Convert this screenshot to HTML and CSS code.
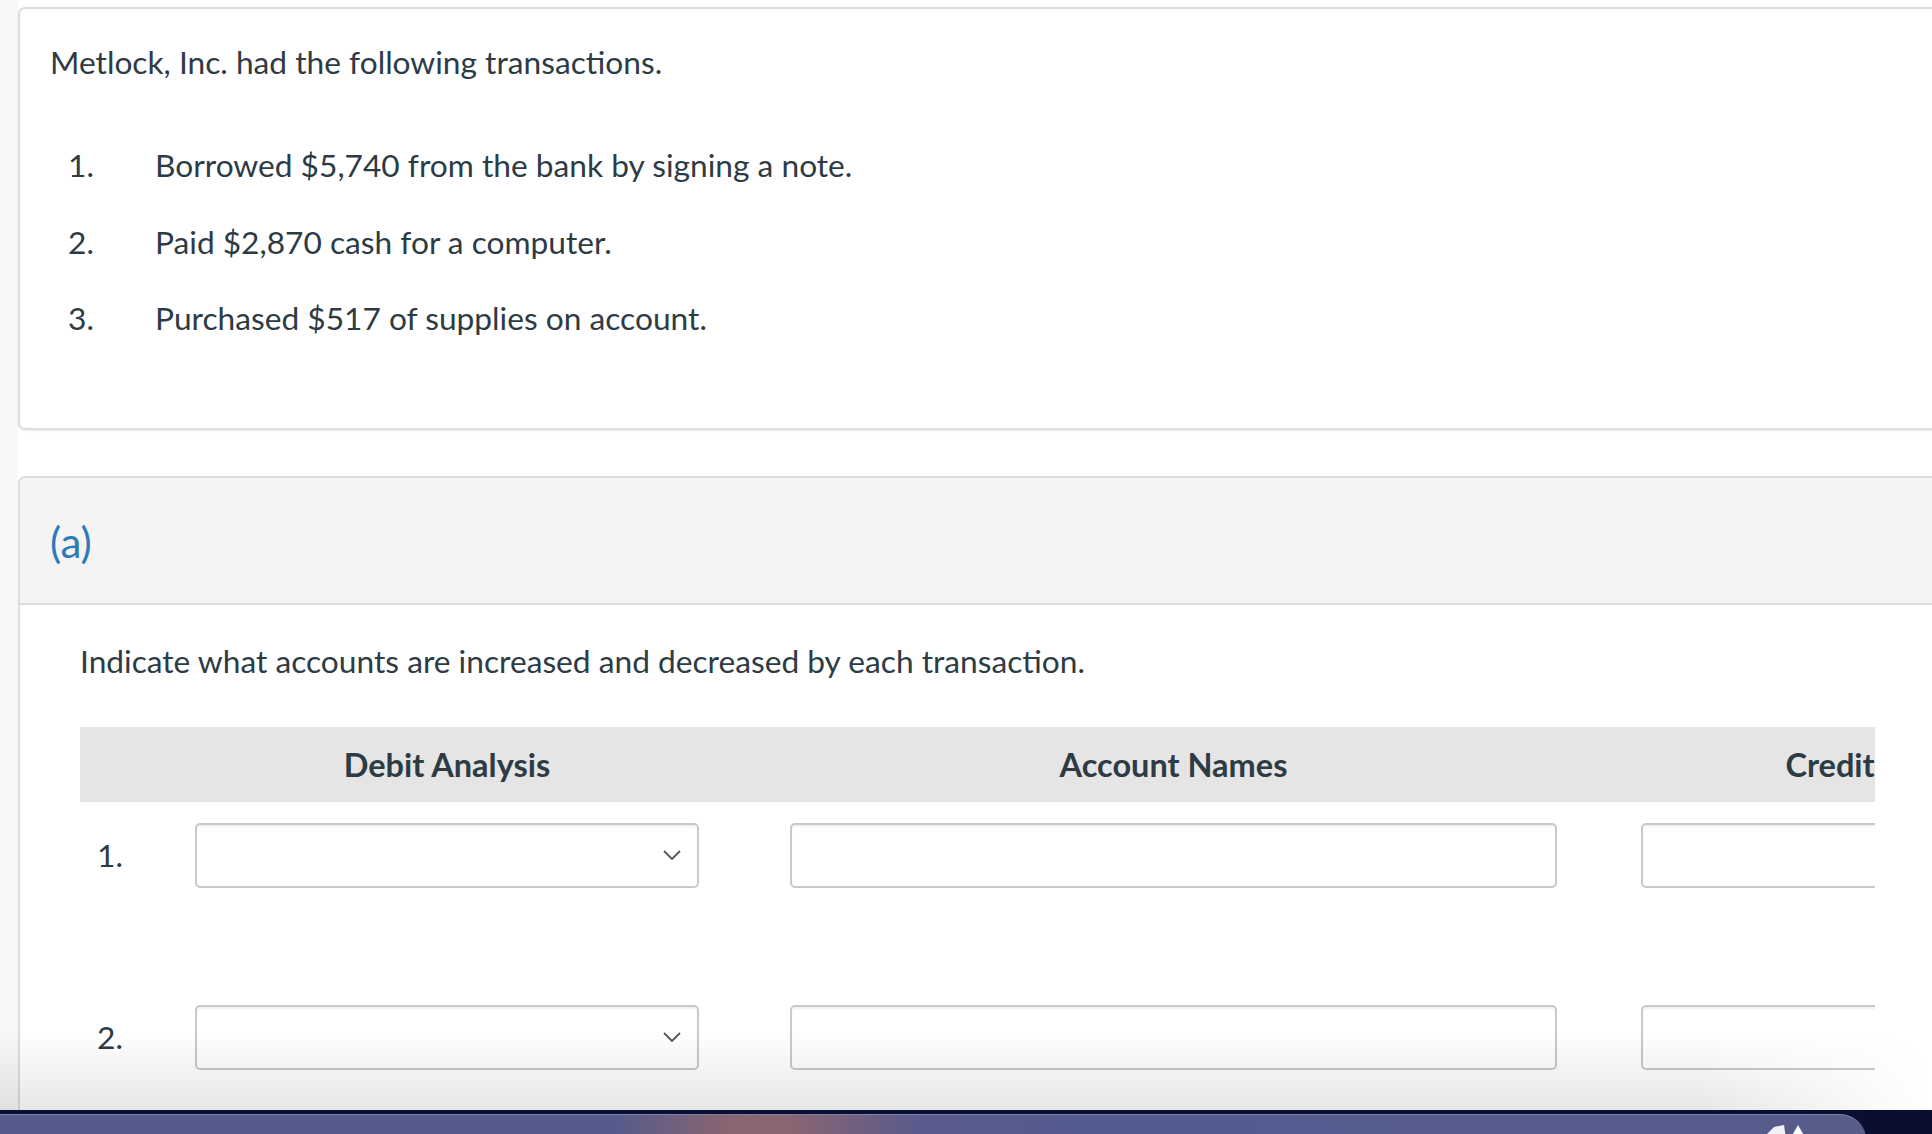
FILE: index.html
```
<!DOCTYPE html>
<html lang="en">
<head>
<meta charset="utf-8">
<title>Metlock, Inc. transactions</title>
<link rel="stylesheet" href="styles.css">
</head>
<body>
<div class="page">
  <div class="card intro">
    <p class="lead">Metlock, Inc. had the following transactions.</p>
    <ol class="tx-list">
      <li><span class="num">1.</span><span>Borrowed $5,740 from the bank by signing a note.</span></li>
      <li><span class="num">2.</span><span>Paid $2,870 cash for a computer.</span></li>
      <li><span class="num">3.</span><span>Purchased $517 of supplies on account.</span></li>
    </ol>
  </div>

  <div class="part">
    <div class="part-head"><span class="part-label">(a)</span></div>
    <div class="part-body">
      <p class="lead">Indicate what accounts are increased and decreased by each transaction.</p>
      <div class="table-wrap">
        <div class="grid head">
          <div></div>
          <div class="th">Debit Analysis</div>
          <div></div>
          <div class="th">Account Names</div>
          <div></div>
          <div class="th">Credit Analysis</div>
        </div>
        <div class="grid row">
          <div class="rownum">1.</div>
          <div class="select"><svg class="chev" width="18" height="10" viewBox="0 0 18 10"><path d="M1 1 L9 9 L17 1" fill="none" stroke="#555" stroke-width="1.8"/></svg></div>
          <div></div>
          <div class="field"></div>
          <div></div>
          <div class="field"></div>
        </div>
        <div class="grid row">
          <div class="rownum">2.</div>
          <div class="select"><svg class="chev" width="18" height="10" viewBox="0 0 18 10"><path d="M1 1 L9 9 L17 1" fill="none" stroke="#555" stroke-width="1.8"/></svg></div>
          <div></div>
          <div class="field"></div>
          <div></div>
          <div class="field"></div>
        </div>
      </div>
    </div>
  </div>
</div>

<div class="shade"></div>
<div class="dock-area">
  <div class="dock">
    <svg class="dock-icon" width="60" height="16" viewBox="0 0 60 16"><path d="M8 16 L20 4 L30 2 L32 16 Z" fill="#f2f2f6"/><path d="M36 16 L44 2 L52 16 Z" fill="#ffffff"/></svg>
  </div>
</div>
</body>
</html>
```

FILE: styles.css
```
html, body {
  margin: 0;
  padding: 0;
  height: 100%;
  overflow: hidden;
}

body {
  background: #f8f8f8;
  font-family: Lato, "Open Sans", "Liberation Sans", sans-serif;
  color: #2d3b45;
  font-size: 31.7px;
}

.page {
  margin-left: 18px;
  width: 2100px;
  height: 100%;
  background: #ffffff;
  padding-top: 7px;
  box-sizing: border-box;
}

.card {
  border: 2px solid #dddddd;
  border-right: none;
  border-radius: 7px 0 0 7px;
  box-shadow: 0 1px 2px rgba(0, 0, 0, 0.08);
}

.intro {
  padding: 32px 32px 32px 30px;
}

.lead {
  margin: 0;
  line-height: 43px;
}

.tx-list {
  list-style: none;
  margin: 60px 0 56px;
  padding: 0;
  display: flex;
  flex-direction: column;
  gap: 33.5px;
}

.tx-list li {
  display: flex;
  line-height: 43px;
}

.tx-list .num {
  width: 87px;
  padding-left: 18px;
  flex: none;
}

.part {
  margin-top: 46px;
  border: 2px solid #dddddd;
  border-right: none;
  border-bottom: none;
  border-radius: 7px 0 0 0;
  height: 800px;
}

.part-head {
  background: #f4f4f4;
  padding: 43px 32px 40px 30px;
  border-bottom: 2px solid #dddddd;
  border-radius: 6px 0 0 0;
}

.part-label {
  display: block;
  font-size: 42px;
  line-height: 42px;
  color: #2e7ab6;
}

.part-body {
  padding: 35px 0 0 60px;
}

.part-body .lead {
  margin-bottom: 43.5px;
}

.table-wrap {
  width: 1795px;
  overflow: hidden;
}

.grid {
  display: grid;
  grid-template-columns: 115px 504px 91px 767px 84px 504px;
  width: 2065px;
}

.head {
  background: #e5e5e5;
  height: 75px;
  align-items: center;
}

.th {
  font-weight: 700;
  font-size: 32.5px;
  text-align: center;
  line-height: 43px;
}

.head .th:first-of-type {
  padding-left: 4px;
}

.row {
  height: 182px;
  padding-top: 21px;
  box-sizing: border-box;
  align-items: start;
}

.rownum {
  padding-left: 17px;
  height: 65px;
  line-height: 65px;
}

.select, .field {
  height: 65px;
  box-sizing: border-box;
  border: 2px solid #c9c9c9;
  border-radius: 5px;
  background: #ffffff;
  box-shadow: inset 0 2px 2px rgba(0, 0, 0, 0.06);
}

.select {
  display: flex;
  align-items: center;
  justify-content: flex-end;
  padding-right: 16px;
}

.shade {
  position: fixed;
  left: 0;
  right: 0;
  bottom: 24px;
  height: 80px;
  background: linear-gradient(to bottom, rgba(0, 0, 0, 0), rgba(0, 0, 0, 0.095));
  -webkit-mask-image: linear-gradient(to right, #000 0%, #000 88%, transparent 100%);
  mask-image: linear-gradient(to right, #000 0%, #000 88%, transparent 100%);
  pointer-events: none;
}

.dock-area {
  position: fixed;
  left: 0;
  right: 0;
  bottom: 0;
  height: 24px;
  background: #0a0e30;
  overflow: hidden;
}

.dock {
  margin-top: 4px;
  margin-left: -30px;
  width: 1896px;
  height: 30px;
  border-top: 1.5px solid #7d82ad;
  border-top-right-radius: 26px;
  background: linear-gradient(to right, #545a89 0%, #555b8b 34%, #8a6470 40%, #8b6571 43%, #5a5b8c 50%, #535b8f 60%, #585c8b 100%);
  position: relative;
}

.dock-icon {
  position: absolute;
  left: 1784px;
  top: 8px;
}
```
